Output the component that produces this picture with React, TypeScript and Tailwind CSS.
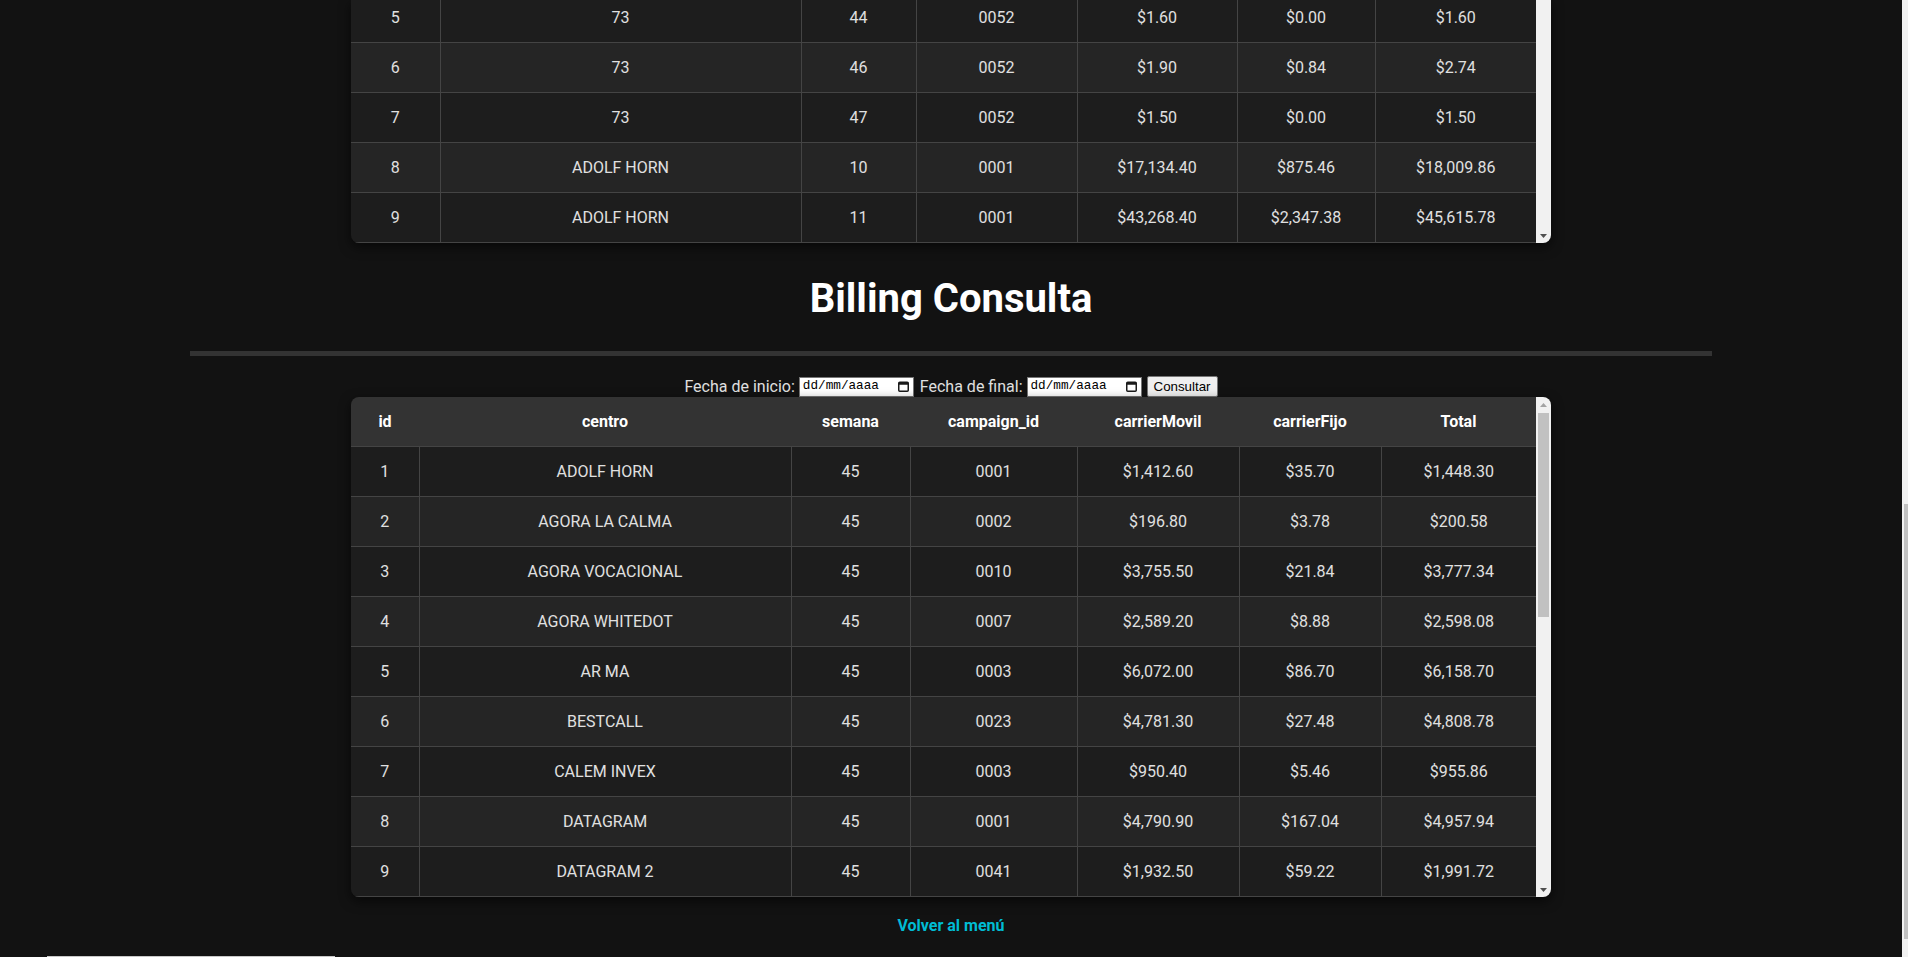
import React from 'react';

type Row = [number, string, string, string, string, string, string];

const headers = ['id', 'centro', 'semana', 'campaign_id', 'carrierMovil', 'carrierFijo', 'Total'];

// column widths measured from the screenshot (table area is 1185px, scrollbar 15px)
const topCols = ['w-[89px]', 'w-[361px]', 'w-[115px]', 'w-[161px]', 'w-[160px]', 'w-[138px]', 'w-[161px]'];
const billingCols = ['w-[68px]', 'w-[372px]', 'w-[119px]', 'w-[167px]', 'w-[162px]', 'w-[142px]', 'w-[155px]'];

const topRows: Row[] = [
    [1, '73', '40', '0052', '$2.10', '$0.00', '$2.10'],
    [2, '73', '41', '0052', '$0.90', '$0.00', '$0.90'],
    [3, '73', '42', '0052', '$1.20', '$0.42', '$1.62'],
    [4, '73', '43', '0052', '$2.40', '$0.00', '$2.40'],
    [5, '73', '44', '0052', '$1.60', '$0.00', '$1.60'],
    [6, '73', '46', '0052', '$1.90', '$0.84', '$2.74'],
    [7, '73', '47', '0052', '$1.50', '$0.00', '$1.50'],
    [8, 'ADOLF HORN', '10', '0001', '$17,134.40', '$875.46', '$18,009.86'],
    [9, 'ADOLF HORN', '11', '0001', '$43,268.40', '$2,347.38', '$45,615.78'],
];

const billingRows: Row[] = [
    [1, 'ADOLF HORN', '45', '0001', '$1,412.60', '$35.70', '$1,448.30'],
    [2, 'AGORA LA CALMA', '45', '0002', '$196.80', '$3.78', '$200.58'],
    [3, 'AGORA VOCACIONAL', '45', '0010', '$3,755.50', '$21.84', '$3,777.34'],
    [4, 'AGORA WHITEDOT', '45', '0007', '$2,589.20', '$8.88', '$2,598.08'],
    [5, 'AR MA', '45', '0003', '$6,072.00', '$86.70', '$6,158.70'],
    [6, 'BESTCALL', '45', '0023', '$4,781.30', '$27.48', '$4,808.78'],
    [7, 'CALEM INVEX', '45', '0003', '$950.40', '$5.46', '$955.86'],
    [8, 'DATAGRAM', '45', '0001', '$4,790.90', '$167.04', '$4,957.94'],
    [9, 'DATAGRAM 2', '45', '0041', '$1,932.50', '$59.22', '$1,991.72'],
];

function DataTable({ rows, cols }: { rows: Row[]; cols: string[] }) {
    return (
        <table className="w-full table-fixed border-collapse text-center text-[16px] leading-[19px] shrink-0">
            <colgroup>
                {cols.map((c, i) => <col key={i} className={c} />)}
            </colgroup>
            <thead>
                <tr className="bg-[#333333]">
                    {headers.map(h => (
                        <th key={h} className="py-[15px] font-bold text-white border-b border-[#444]">{h}</th>
                    ))}
                </tr>
            </thead>
            <tbody>
                {rows.map((r, i) => (
                    <tr key={r[0]} className={i % 2 === 1 ? 'bg-[#252525]' : 'bg-[#1d1d1d]'}>
                        {r.map((v, j) => (
                            <td key={j} className="py-[15px] text-[#e0e0e0] border border-[#444] first:border-l-0 last:border-r-0">{v}</td>
                        ))}
                    </tr>
                ))}
            </tbody>
        </table>
    );
}

function Arrow({ up }: { up?: boolean }) {
    return (
        <div className="h-[15px] flex items-center justify-center shrink-0">
            <svg width="7" height="4" viewBox="0 0 7 4">
                <path d={up ? 'M0 4h7L3.5 0z' : 'M0 0h7L3.5 4z'} fill={up ? '#a3a3a3' : '#505050'} />
            </svg>
        </div>
    );
}

function DateBox() {
    return (
        <div className="w-[115px] h-[20px] bg-white border border-[#767676] flex items-center justify-between pl-[3px] pr-[4px]">
            <span className="font-['Liberation_Mono',monospace] text-[12.7px] leading-none text-black">dd/mm/aaaa</span>
            <svg width="11" height="11" viewBox="0 0 11 11">
                <rect x="0.75" y="1.25" width="9.5" height="9" rx="1" fill="none" stroke="#1a1a1a" strokeWidth="1.5" />
                <rect x="0.75" y="1.25" width="9.5" height="2.5" fill="#1a1a1a" />
            </svg>
        </div>
    );
}

export default function App() {
    return (
        <div className="h-[957px] w-full overflow-hidden bg-[#121212] flex font-[Roboto,sans-serif]">
            <div className="flex-1 min-w-0 flex flex-col">
                {/* first table, only its last rows are on screen */}
                <div className="mx-auto w-[1200px] h-[243px] shrink-0 flex rounded-b-lg overflow-hidden shadow-[0_4px_12px_rgba(0,0,0,0.6)]">
                    <div className="flex-1 min-w-0 flex flex-col justify-end overflow-hidden">
                        <DataTable rows={topRows} cols={topCols} />
                    </div>
                    <div className="w-[15px] bg-[#f1f1f1] flex flex-col justify-end">
                        <Arrow />
                    </div>
                </div>

                <h1 className="mt-[32px] text-center text-[40px] leading-[47px] font-bold text-white">Billing Consulta</h1>

                <div className="mt-[29px] mx-auto w-[80%] h-[5px] bg-[#333] shrink-0" />

                <div className="mt-[20px] h-[21px] flex items-center justify-center gap-[4px] text-[16px] text-[#e0e0e0] shrink-0">
                    <span>Fecha de inicio:</span>
                    <DateBox />
                    <span className="ml-[2px]">Fecha de final:</span>
                    <DateBox />
                    <button className="ml-[1px] h-[21px] px-[6px] bg-[#efefef] border border-[#767676] rounded-[2px] text-black text-[13.33px] font-['Liberation_Sans',Arial,sans-serif]">
                        Consultar
                    </button>
                </div>

                <div className="mx-auto w-[1200px] h-[500px] shrink-0 flex rounded-lg overflow-hidden shadow-[0_4px_12px_rgba(0,0,0,0.6)]">
                    <div className="flex-1 min-w-0 overflow-hidden">
                        <DataTable rows={billingRows} cols={billingCols} />
                    </div>
                    <div className="w-[15px] bg-[#f1f1f1] flex flex-col">
                        <Arrow up />
                        <div className="mt-[1px] mx-[2px] h-[204px] bg-[#c1c1c1]" />
                        <div className="flex-1" />
                        <Arrow />
                    </div>
                </div>

                <div className="mt-[19px] text-center leading-[19px]">
                    <a href="#" className="text-[16px] font-bold text-[#00bcd4]">Volver al menú</a>
                </div>

                <div className="mt-auto h-[1px] flex shrink-0">
                    <div className="ml-[47px] w-[288px] bg-[#c8c8c8]" />
                </div>
            </div>

            {/* edge of the page scrollbar */}
            <div className="w-[6px] flex flex-col bg-[#f1f1f1]">
                <div className="h-[504px]" />
                <div className="h-[435px] pl-[2px] flex">
                    <div className="flex-1 bg-[#c1c1c1]" />
                </div>
            </div>
        </div>
    );
}
